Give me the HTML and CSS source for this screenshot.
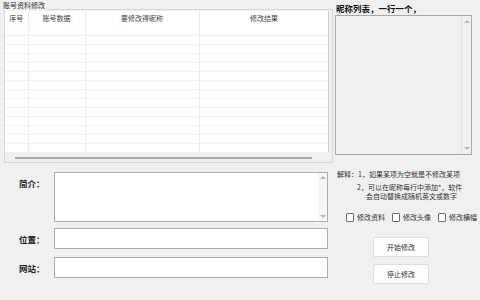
FILE: index.html
```html
<!DOCTYPE html>
<html lang="zh-CN">
<head>
    <meta charset="UTF-8">
    <title>账号资料修改</title>
    <link rel="stylesheet" href="styles.css">
</head>
<body>
    <div class="window">
        <div class="left">
            <div class="group-head">
                <span class="group-title">账号资料修改</span>
                <span class="group-line"></span>
            </div>
            <div class="group-box">
                <div class="grid-wrap">
                    <table class="grid">
                        <colgroup>
                            <col class="c1"><col class="c2"><col class="c3"><col class="c4">
                        </colgroup>
                        <thead>
                            <tr><th>序号</th><th>账号数据</th><th>要修改得昵称</th><th>修改结果</th></tr>
                        </thead>
                        <tbody id="grid-body"></tbody>
                    </table>
                </div>
                <div class="hscroll"><div class="hthumb"></div></div>
            </div>

            <div class="fields">
                <div class="field field-memo">
                    <label>简介：</label>
                    <div class="memo">
                        <div class="memo-body"></div>
                        <div class="vbar">
                            <span class="arrow up"></span>
                            <span class="arrow down"></span>
                        </div>
                    </div>
                </div>
                <div class="field">
                    <label>位置：</label>
                    <input class="edit" type="text">
                </div>
                <div class="field">
                    <label>网站：</label>
                    <input class="edit" type="text">
                </div>
            </div>
        </div>

        <div class="right">
            <div class="list-title">昵称列表，一行一个，</div>
            <div class="list-box">
                <div class="list-body"></div>
                <div class="vbar vbar-list">
                    <span class="arrow up"></span>
                    <span class="arrow down"></span>
                </div>
            </div>

            <div class="notes">
                <p class="note1">解释：1，如果某项为空就是不修改某项</p>
                <p class="note2">2，可以在昵称每行中添加*，软件</p>
                <p class="note3">会自动替换成随机英文或数字</p>
            </div>

            <div class="checks">
                <label class="check"><span class="box"></span>修改资料</label>
                <label class="check"><span class="box"></span>修改头像</label>
                <label class="check"><span class="box"></span>修改横幅</label>
            </div>

            <div class="buttons">
                <button type="button">开始修改</button>
                <button type="button">停止修改</button>
            </div>
        </div>
    </div>

    <script>
        // empty rows for the grid
        const body = document.getElementById('grid-body');
        for (let i = 0; i < 14; i++) {
            const tr = document.createElement('tr');
            for (let j = 0; j < 4; j++) tr.appendChild(document.createElement('td'));
            body.appendChild(tr);
        }
    </script>
</body>
</html>
```

FILE: styles.css
```css
body { margin: 0; background: #f0f0f0; font-family: "Noto Sans CJK SC", "Liberation Sans", sans-serif; font-size: 7px; color: #222; }
.window { display: flex; width: 480px; height: 300px; overflow: hidden; }

/* left side */
.left { margin-left: 4px; width: 329px; }
.group-head { display: flex; height: 10px; }
.group-title { line-height: 10px; margin-left: -1px; padding-right: 2px; color: #333; }
.group-line { flex: 1; height: 9px; border-bottom: 1px solid #d6d6d6; }
.group-box { border: 1px solid #d6d6d6; border-top: 0; padding: 1px 3px 0 0; }
.grid-wrap { height: 141px; overflow: hidden; background: #fff; border-right: 1px solid #cfcfcf; }
.grid { border-collapse: collapse; table-layout: fixed; width: 324px; }
.grid .c1 { width: 23px; }
.grid .c2 { width: 57px; }
.grid .c3 { width: 114px; }
.grid .c4 { width: 130px; }
.grid th { height: 21px; padding: 3px 0 0; vertical-align: top; font-weight: normal; color: #444; border-right: 1px solid #ebebeb; border-bottom: 1px solid #ececec; line-height: 9px; }
.grid td { height: 8px; padding: 0; border-right: 1px solid #ebebeb; border-bottom: 1px solid #f0f0f0; }
.hscroll { height: 10px; padding-top: 5px; box-sizing: border-box; }
.hthumb { margin-left: 10px; width: 297px; height: 2px; background: #a9a9a9; }

.fields { margin-top: 9px; }
.field { display: flex; align-items: center; margin-bottom: 8px; }
.field label { width: 35px; padding-left: 15px; font-size: 8.5px; font-weight: bold; color: #222; }
.field-memo { align-items: flex-start; margin-bottom: 6px; }
.field-memo label { padding-top: 5px; }
.memo { display: flex; width: 274px; height: 50px; box-sizing: border-box; border: 1px solid #adadad; background: #fff; }
.memo-body { flex: 1; }
.edit { width: 274px; height: 21px; box-sizing: border-box; margin: 0; border: 1px solid #adadad; background: #fff; }

.vbar { width: 9px; display: flex; flex-direction: column; justify-content: space-between; align-items: center; padding: 3px 0; background: #f6f6f6; }
.arrow { width: 0; height: 0; border-left: 3px solid transparent; border-right: 3px solid transparent; }
.arrow.up { border-bottom: 3px solid #b5b5b5; }
.arrow.down { border-top: 3px solid #b5b5b5; }

/* right side */
.right { margin-left: 2px; width: 145px; }
.list-title { margin: 3px 0 0 1px; height: 10px; line-height: 10px; white-space: nowrap; font-size: 8.5px; font-weight: bold; color: #111; }
.list-box { display: flex; margin-top: 2px; width: 137px; height: 140px; box-sizing: border-box; border: 1px solid #a9a9a9; background: #f0f0f0; }
.list-body { flex: 1; }
.vbar-list { background: #f0f0f0; border-left: 1px solid #e2e2e2; padding: 4px 0; }

.notes { margin-top: 15px; color: #333; }
.notes p { margin: 0; line-height: 9px; white-space: nowrap; }
.note1 { padding-left: 2px; }
.note2 { padding-left: 22px; margin-top: 4px !important; }
.note3 { padding-left: 31px; }

.checks { display: flex; margin-top: 11px; padding-left: 11px; gap: 7px; line-height: 10px; }
.check { display: flex; align-items: center; gap: 3px; width: 39px; white-space: nowrap; color: #333; }
.box { width: 7px; height: 7px; border: 1px solid #6d6d6d; border-radius: 1px; background: #fff; }

.buttons { display: flex; flex-direction: column; gap: 7px; margin: 15px 0 0 38px; }
.buttons button { width: 56px; height: 20px; padding: 0; font-family: inherit; font-size: 7px; color: #333; background: #fdfdfd; border: 1px solid #dedede; border-radius: 2px; }
```
